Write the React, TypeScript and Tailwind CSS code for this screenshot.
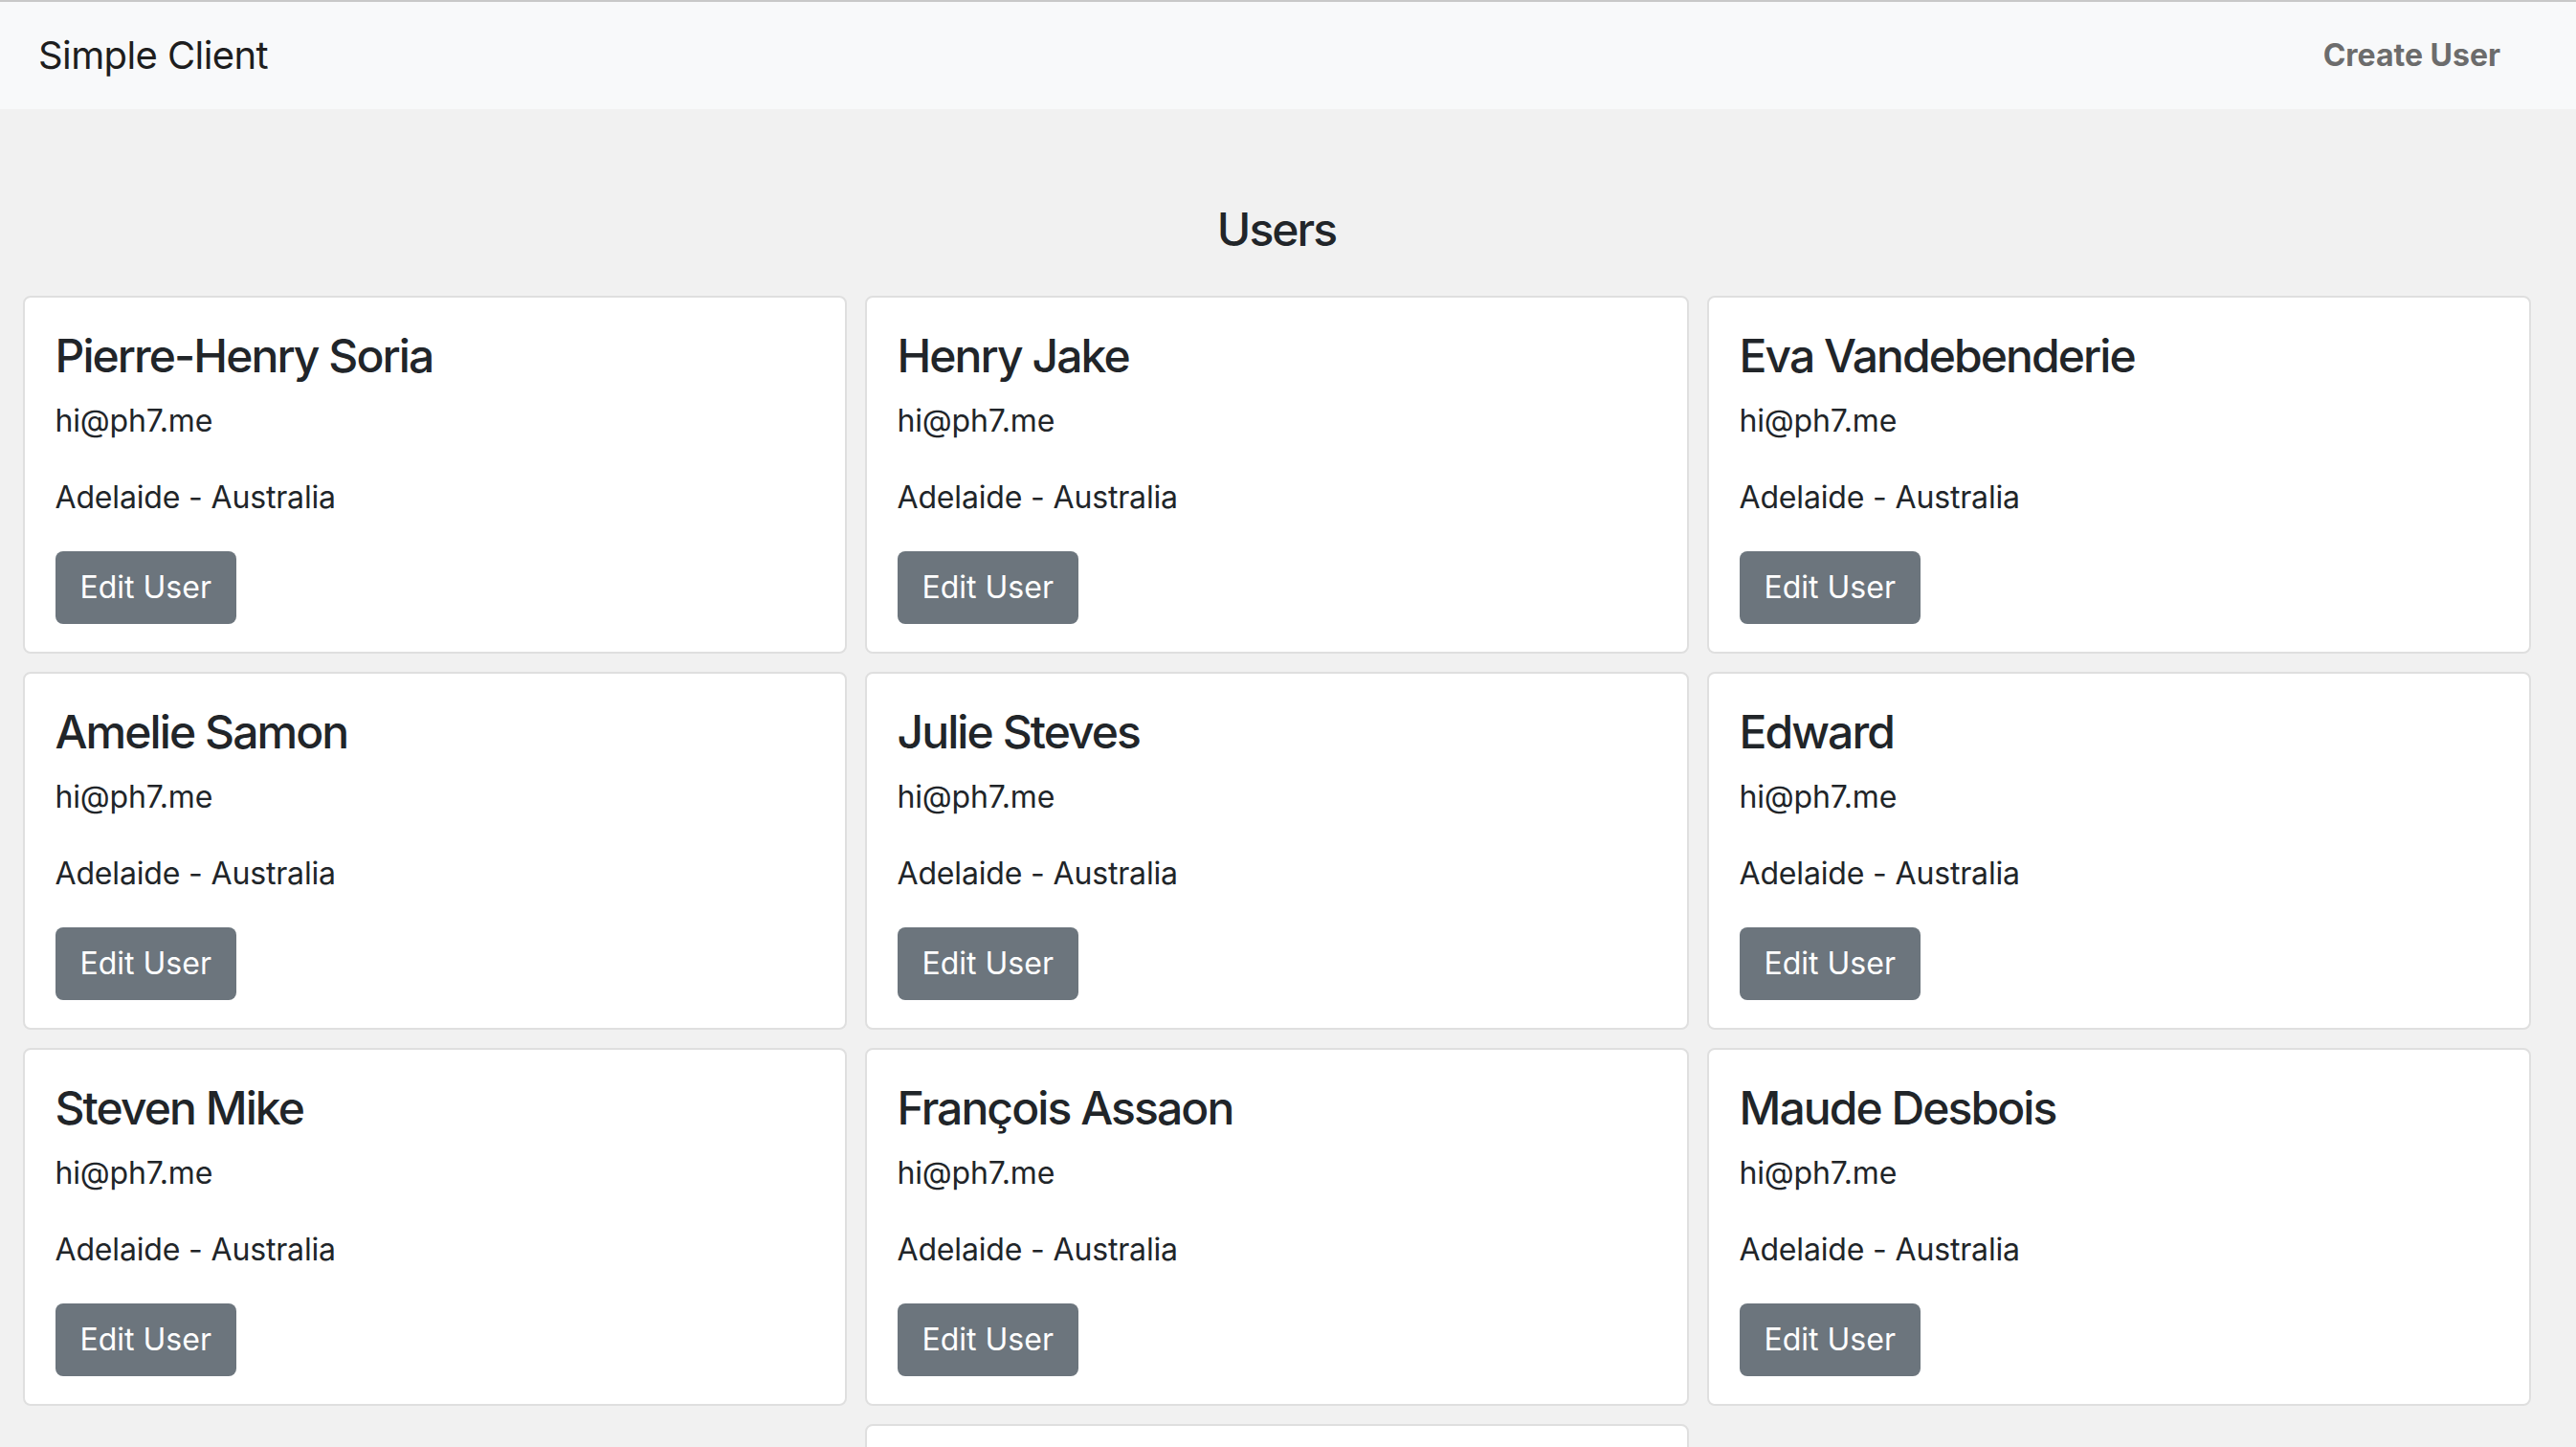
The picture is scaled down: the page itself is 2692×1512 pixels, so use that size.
const users = [
  'Pierre-Henry Soria',
  'Henry Jake',
  'Eva Vandebenderie',
  'Amelie Samon',
  'Julie Steves',
  'Edward',
  'Steven Mike',
  'François Assaon',
  'Maude Desbois',
  'Jonathan Smith',
];

function UserCard({ name }: { name: string }) {
  return (
    <div className="w-[861px] bg-white border-2 border-[#dfdfdf] rounded-[8px] px-[32px] pt-[32px] pb-[29px]">
      <h4 className="text-[48px] leading-[58px] font-medium tracking-[-0.04em] text-[#212529] mb-[15px]">{name}</h4>
      <p className="text-[32px] leading-[48px] tracking-[-0.005em] text-[#212529] mb-[32px]">hi@ph7.me</p>
      <p className="text-[32px] leading-[48px] tracking-[-0.005em] text-[#212529] mb-[32px]">Adelaide - Australia</p>
      <button className="h-[76px] px-[26px] rounded-[8px] bg-[#6c757d] text-white text-[32px] leading-[48px]">
        Edit User
      </button>
    </div>
  );
}

export default function App() {
  return (
    <div className="min-h-screen bg-[#f1f1f1] font-['Inter','Liberation_Sans',sans-serif] text-[#212529]">
      <nav className="border-t-2 border-[#c8c8c8] bg-[#f8f9fa] h-[114px] flex items-center justify-between pl-[40px] pr-[79px]">
        <span className="text-[40px] tracking-[-0.015em] text-[#1e1e1e]">Simple Client</span>
        <a className="text-[32px] font-bold text-[#6c6c6c]">Create User</a>
      </nav>
      <main className="pl-[23px] pr-[47px] pt-[97px]">
        <h4 className="text-center text-[48px] leading-[58px] font-medium tracking-[-0.04em] mb-[40px]">Users</h4>
        <div className="flex flex-wrap justify-center gap-[19px]">
          {users.map((u) => (
            <UserCard key={u} name={u} />
          ))}
        </div>
      </main>
    </div>
  );
}
